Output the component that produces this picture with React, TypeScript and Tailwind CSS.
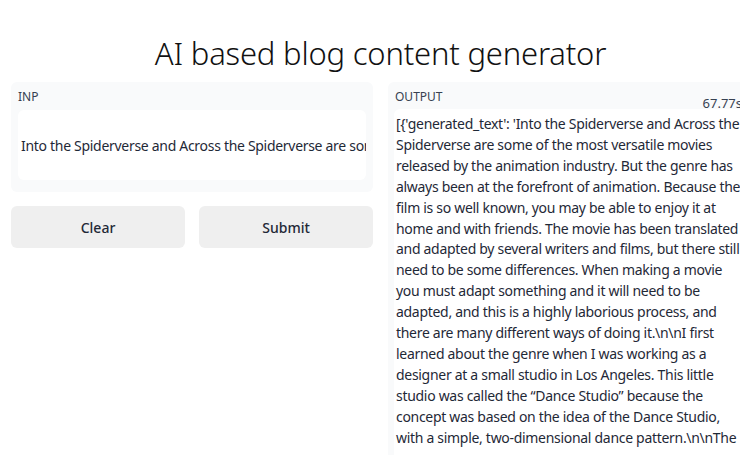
import React from "react";

const outputLines = [
  "[{'generated_text': 'Into the Spiderverse and Across the",
  "Spiderverse are some of the most versatile movies",
  "released by the animation industry. But the genre has",
  "always been at the forefront of animation. Because the",
  "film is so well known, you may be able to enjoy it at",
  "home and with friends. The movie has been translated",
  "and adapted by several writers and films, but there still",
  "need to be some differences. When making a movie",
  "you must adapt something and it will need to be",
  "adapted, and this is a highly laborious process, and",
  "there are many different ways of doing it.\\n\\nI first",
  "learned about the genre when I was working as a",
  "designer at a small studio in Los Angeles. This little",
  "studio was called the \u201cDance Studio\u201d because the",
  "concept was based on the idea of the Dance Studio,",
  "with a simple, two-dimensional dance pattern.\\n\\nThe",
];

function ActionButton({ label }: { label: string }) {
  return (
    <button className="h-[42px] rounded-md bg-[#efefef] text-[14px] font-medium text-[#1f2937]">
      {label}
    </button>
  );
}

export default function App() {
  return (
    <div className="w-full h-[455px] overflow-hidden bg-white font-['Noto_Sans','Open_Sans',sans-serif] text-[#111827]">
      <div className="w-[761px] px-[11px] pt-[34px]">
        <h1 className="text-center text-[31px] leading-[38px] font-light tracking-[-0.2px] text-[#111]">
          AI based blog content generator
        </h1>

        <div className="mt-[10px] grid grid-cols-2 gap-[15px] items-start">
          {/* Input side */}
          <div>
            <div className="rounded-md bg-[#f9fafb] px-[7px] pt-[7px] pb-[12px]">
              <div className="text-[12px] leading-[16px] text-[#374151]">INP</div>
              <div className="mt-[5px] h-[70px] rounded-md bg-white flex items-center px-[3px] overflow-hidden">
                <span className="whitespace-nowrap text-[14px] text-[#1f2937] tracking-[-0.3px]">
                  Into the Spiderverse and Across the Spiderverse are some
                </span>
              </div>
            </div>
            <div className="mt-[14px] grid grid-cols-2 gap-[14px]">
              <ActionButton label="Clear" />
              <ActionButton label="Submit" />
            </div>
          </div>

          {/* Output side */}
          <div className="rounded-md bg-[#f9fafb] px-[6px] pt-[7px] h-[400px] relative">
            <div className="text-[12px] leading-[16px] text-[#374151] pl-[1px]">OUTPUT</div>
            <span className="absolute right-[8px] top-[12px] text-[13px] text-[#374151]">67.77s</span>
            <div className="mt-[4px] rounded-md bg-white pl-[2px] pt-[5px] h-[400px] text-[14px] leading-[20.9px] text-[#1f2937] tracking-[-0.3px]">
              {outputLines.map((l, i) => (
                <div key={i} className="whitespace-nowrap">
                  {l}
                </div>
              ))}
            </div>
          </div>
        </div>
      </div>
    </div>
  );
}
